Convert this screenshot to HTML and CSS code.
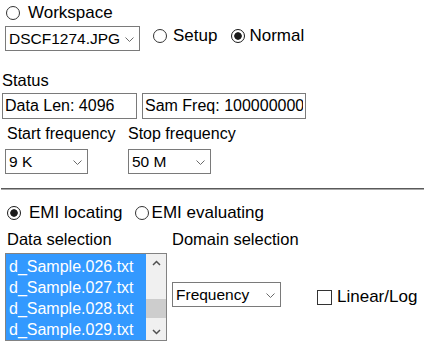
FILE: index.html
```html
<!DOCTYPE html>
<html>
<head>
<meta charset="utf-8">
<link rel="stylesheet" href="styles.css">
</head>
<body>
<div class="row r1">
  <label class="opt"><input type="radio" class="radio gap7" name="mode">Workspace</label>
</div>
<div class="row r2">
  <span class="sel">
    <select class="select w135"><option>DSCF1274.JPG</option></select>
    <svg class="chev" width="9" height="5" viewBox="0 0 9 5"><polyline points="0.5,0.5 4.5,4.5 8.5,0.5" fill="none" stroke="#6a6a6a" stroke-width="1"/></svg>
  </span>
  <label class="opt setup"><input type="radio" class="radio gap6" name="mode">Setup</label>
  <label class="opt normal"><input type="radio" class="radio gap4" name="mode" checked>Normal</label>
</div>
<div class="status">Status</div>
<div class="row r3">
  <input class="inp in1" type="text" value="Data Len: 4096">
  <input class="inp in2" type="text" value="Sam Freq: 1000000000">
</div>
<div class="fgrid">
  <div class="flabel first">Start frequency</div>
  <div class="flabel">Stop frequency</div>
  <span class="sel">
    <select class="select w83"><option>9 K</option></select>
    <svg class="chev" width="9" height="5" viewBox="0 0 9 5"><polyline points="0.5,0.5 4.5,4.5 8.5,0.5" fill="none" stroke="#6a6a6a" stroke-width="1"/></svg>
  </span>
  <span class="sel">
    <select class="select w83"><option>50 M</option></select>
    <svg class="chev" width="9" height="5" viewBox="0 0 9 5"><polyline points="0.5,0.5 4.5,4.5 8.5,0.5" fill="none" stroke="#6a6a6a" stroke-width="1"/></svg>
  </span>
</div>
<hr class="sep">
<div class="row r4">
  <label class="opt"><input type="radio" class="radio gap7" name="emi" checked>EMI locating</label>
  <label class="opt evaluating"><input type="radio" class="radio gap3" name="emi">EMI evaluating</label>
</div>
<div class="dgrid">
  <div class="dlabel first">Data selection</div>
  <div class="dlabel">Domain selection</div>
  <div class="listbox">
    <div class="items">
      <div class="item">d_Sample.026.txt</div>
      <div class="item">d_Sample.027.txt</div>
      <div class="item">d_Sample.028.txt</div>
      <div class="item">d_Sample.029.txt</div>
    </div>
    <div class="scrollbar">
      <div class="sbtn">
        <svg width="9" height="6" viewBox="0 0 9 6"><polyline points="1,5 4.5,1.5 8,5" fill="none" stroke="#505050" stroke-width="1.5"/></svg>
      </div>
      <div class="track"><div class="thumb"></div></div>
      <div class="sbtn">
        <svg width="9" height="6" viewBox="0 0 9 6"><polyline points="1,1 4.5,4.5 8,1" fill="none" stroke="#505050" stroke-width="1.5"/></svg>
      </div>
    </div>
  </div>
  <div class="domain">
    <span class="sel lift">
      <select class="select w109"><option>Frequency</option></select>
      <svg class="chev" width="9" height="5" viewBox="0 0 9 5"><polyline points="0.5,0.5 4.5,4.5 8.5,0.5" fill="none" stroke="#6a6a6a" stroke-width="1"/></svg>
    </span>
    <label class="opt check"><input type="checkbox" class="cbox">Linear/Log</label>
  </div>
</div>
</body>
</html>
```

FILE: styles.css
```css
body {
  margin: 0;
  font-family: "Liberation Sans", Arial, sans-serif;
  font-size: 16px;
  color: #000;
  background: #fff;
}

.row {
  display: flex;
}

.opt {
  display: inline-flex;
  align-items: center;
  font-size: 17px;
  line-height: 20px;
  height: 20px;
  white-space: nowrap;
}

.radio {
  appearance: none;
  -webkit-appearance: none;
  margin: 0;
  width: 14px;
  height: 14px;
  box-sizing: border-box;
  border: 1px solid #333;
  border-radius: 50%;
  background: #fff;
  flex: none;
}

.radio:checked {
  border-color: #1a1a1a;
  background: radial-gradient(circle, #1a1a1a 0 3.4px, #fff 4.1px);
}

.gap7 { margin-right: 8px; }
.gap6 { margin-right: 6px; }
.gap4 { margin-right: 4px; }
.gap3 { margin-right: 3px; }

.r1 {
  padding: 3px 0 0 6px;
}

.r2 {
  margin-top: 3px;
  padding-left: 5px;
  align-items: flex-start;
}

.setup { margin-left: 13px; }
.normal { margin-left: 14px; }

.sel {
  position: relative;
  display: inline-block;
  height: 25px;
  justify-self: start;
  align-self: start;
}

.select {
  appearance: none;
  -webkit-appearance: none;
  display: block;
  box-sizing: border-box;
  height: 25px;
  margin: 0;
  padding: 0 0 0 3px;
  border: 1px solid #7a7a7a;
  border-radius: 0;
  background: #fff;
  color: #000;
  font-family: "Liberation Sans", Arial, sans-serif;
  font-size: 15.5px;
}

.w135 { width: 135px; }
.w83 { width: 83px; }
.w109 { width: 109px; }

.chev {
  position: absolute;
  right: 6px;
  top: 11px;
}

.status {
  margin-top: 19px;
  padding-left: 2px;
  line-height: 20px;
  font-size: 16.5px;
}

.r3 {
  margin-top: 3px;
  padding-left: 2px;
}

.inp {
  box-sizing: border-box;
  height: 26px;
  margin: 0;
  padding: 0 2px;
  border: 1px solid #7a7a7a;
  border-radius: 0;
  font-family: "Liberation Sans", Arial, sans-serif;
  font-size: 16px;
  color: #000;
}

.in1 { width: 135px; }
.in2 { width: 164px; margin-left: 5px; }

.fgrid {
  display: grid;
  grid-template-columns: 123px auto;
  grid-template-rows: 20px 25px;
  row-gap: 5px;
  margin-top: 5px;
  padding-left: 5px;
  justify-content: start;
}

.flabel {
  line-height: 20px;
  white-space: nowrap;
}

.flabel.first { padding-left: 2px; }

.sep {
  margin: 14px 1px 0;
  height: 0;
  border: 0;
  border-top: 1px solid #5a5a5a;
  border-bottom: 1px solid #a8a8a8;
}

.r4 {
  margin-top: 13px;
  padding-left: 7px;
}

.evaluating { margin-left: 12px; }

.dgrid {
  display: grid;
  grid-template-columns: 167px auto;
  grid-template-rows: 20px 88px;
  row-gap: 4px;
  margin-top: 6px;
  padding-left: 5px;
  justify-content: start;
}

.dlabel {
  line-height: 20px;
  font-size: 16.5px;
  white-space: nowrap;
}

.dlabel.first { padding-left: 2px; }

.listbox {
  width: 162px;
  height: 88px;
  box-sizing: border-box;
  border: 1px solid #828282;
  display: flex;
}

.items {
  flex: 1;
  overflow: hidden;
  padding-top: 2px;
  background: #3399ff;
}

.item {
  height: 21px;
  line-height: 21px;
  padding-left: 3px;
  color: #fff;
  white-space: nowrap;
}

.scrollbar {
  width: 20px;
  display: flex;
  flex-direction: column;
  background: #f0f0f0;
}

.sbtn {
  height: 17px;
  display: flex;
  align-items: center;
  justify-content: center;
}

.track {
  flex: 1;
}

.thumb {
  margin-top: 28px;
  height: 19px;
  background: #cdcdcd;
}

.domain {
  display: flex;
  align-items: center;
}

.domain .sel {
  align-self: center;
}

.lift { margin-bottom: 5px; }

.check {
  margin-left: 36px;
}

.cbox {
  appearance: none;
  -webkit-appearance: none;
  margin: 0 5px 0 0;
  width: 15px;
  height: 15px;
  box-sizing: border-box;
  border: 1px solid #333;
  border-radius: 0;
  background: #fff;
  flex: none;
}
```
